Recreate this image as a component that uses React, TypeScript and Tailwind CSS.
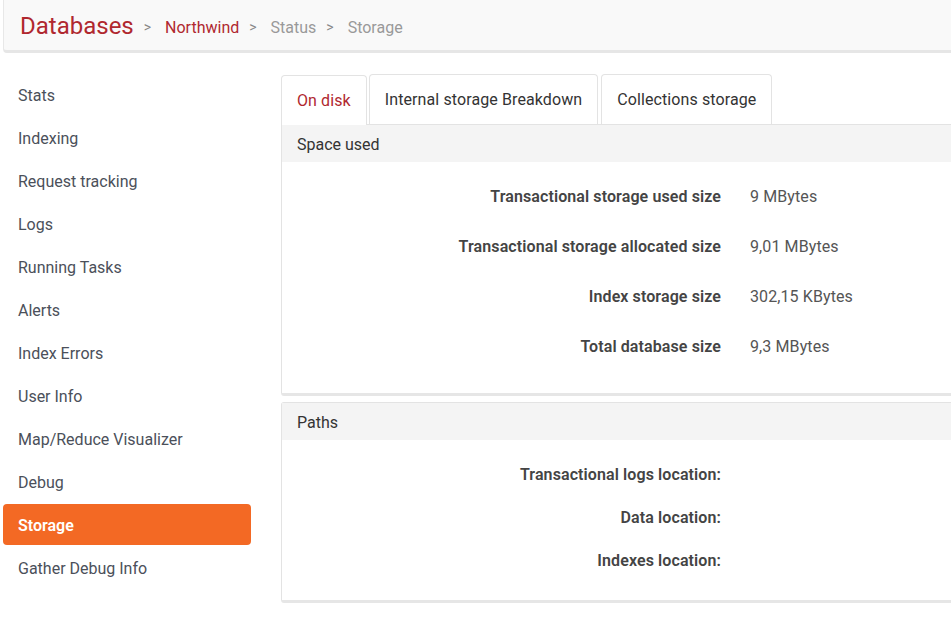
const menu = [
    'Stats',
    'Indexing',
    'Request tracking',
    'Logs',
    'Running Tasks',
    'Alerts',
    'Index Errors',
    'User Info',
    'Map/Reduce Visualizer',
    'Debug',
    'Storage',
    'Gather Debug Info',
];

const spaceRows = [
    ['Transactional storage used size', '9 MBytes'],
    ['Transactional storage allocated size', '9,01 MBytes'],
    ['Index storage size', '302,15 KBytes'],
    ['Total database size', '9,3 MBytes'],
];

const pathRows = ['Transactional logs location:', 'Data location:', 'Indexes location:'];

const Sep = () => <span className="ml-[10px] mr-[14px] mt-[4px] text-[14px] text-[#888]">&gt;</span>;

const App = () => {
    return (
        <div className="w-[951px] h-[628px] overflow-hidden bg-white text-[#444]" style={{fontFamily: 'Roboto, "Noto Sans", sans-serif'}}>
            {/* header / breadcrumb */}
            <div className="ml-[3px] w-[1000px] h-[53px] bg-[#f9f9f9] border-l border-[#e8e8e8] border-b-[3px] border-b-[#e6e6e6] rounded-bl-[4px] flex items-center pl-[16px] pt-[1px]">
                <span className="text-[24px] text-[#b0282f]">Databases</span>
                <Sep/>
                <span className="text-[16px] text-[#b0282f] mt-[5px]">Northwind</span>
                <Sep/>
                <span className="text-[16px] text-[#999] mt-[5px]">Status</span>
                <Sep/>
                <span className="text-[16px] text-[#999] mt-[5px]">Storage</span>
            </div>

            <div className="flex mt-[21px]">
                {/* sidebar */}
                <div className="w-[248px] ml-[3px] flex flex-col gap-[2px] shrink-0">
                    {menu.map((m) => (
                        <div
                            key={m}
                            className={
                                m === 'Storage'
                                    ? 'h-[41px] flex items-center pl-[15px] pt-[2px] text-[16px] rounded-[4px] bg-[#f36924] text-white font-semibold'
                                    : 'h-[41px] flex items-center pl-[15px] pt-[2px] text-[16px] text-[#4b505a]'
                            }
                        >
                            {m}
                        </div>
                    ))}
                </div>

                {/* content */}
                <div className="ml-[30px] w-[720px] shrink-0">
                    <div className="flex gap-[2px] h-[50px]">
                        <div className="px-[15px] flex items-center border border-b-0 border-[#e3e3e3] rounded-t-[4px] bg-white text-[16px] text-[#b0282f] relative top-[1px] h-[50px] tracking-[0.1px]">On disk</div>
                        <div className="px-[15px] flex items-center border border-b-0 border-[#e3e3e3] rounded-t-[4px] bg-white text-[16px] text-[#333] tracking-[0.1px]">Internal storage Breakdown</div>
                        <div className="ml-[1px] px-[15px] flex items-center border border-b-0 border-[#e3e3e3] rounded-t-[4px] bg-white text-[16px] text-[#333] tracking-[0.1px]">Collections storage</div>
                    </div>

                    <div className="border border-[#e3e3e3] border-b-[3px] border-b-[#e6e6e6] rounded-b-[3px] mb-[6px]">
                        <div className="h-[37px] bg-[#f4f4f4] flex items-center px-[15px] pt-[2px] text-[16px] text-[#333]">Space used</div>
                        <div className="pt-[10px] pb-[21px]">
                            {spaceRows.map(([l, v]) => (
                                <div key={l} className="h-[50px] flex items-center text-[16px]">
                                    <div className="w-[439px] text-right font-semibold text-[#444] tracking-[0.1px]">{l}</div>
                                    <div className="pl-[29px] text-[#555] tracking-[0.1px]">{v}</div>
                                </div>
                            ))}
                        </div>
                    </div>

                    <div className="border border-[#e3e3e3] border-b-[3px] border-b-[#e6e6e6] rounded-[3px]">
                        <div className="h-[37px] bg-[#f4f4f4] flex items-center px-[15px] pt-[2px] text-[16px] text-[#333]">Paths</div>
                        <div className="pt-[13px] pb-[18px]">
                            {pathRows.map((l) => (
                                <div key={l} className="h-[43px] flex items-center text-[16px]">
                                    <div className="w-[439px] text-right font-semibold text-[#444] tracking-[0.1px]">{l}</div>
                                </div>
                            ))}
                        </div>
                    </div>
                </div>
            </div>
        </div>
    );
};

export default App;
